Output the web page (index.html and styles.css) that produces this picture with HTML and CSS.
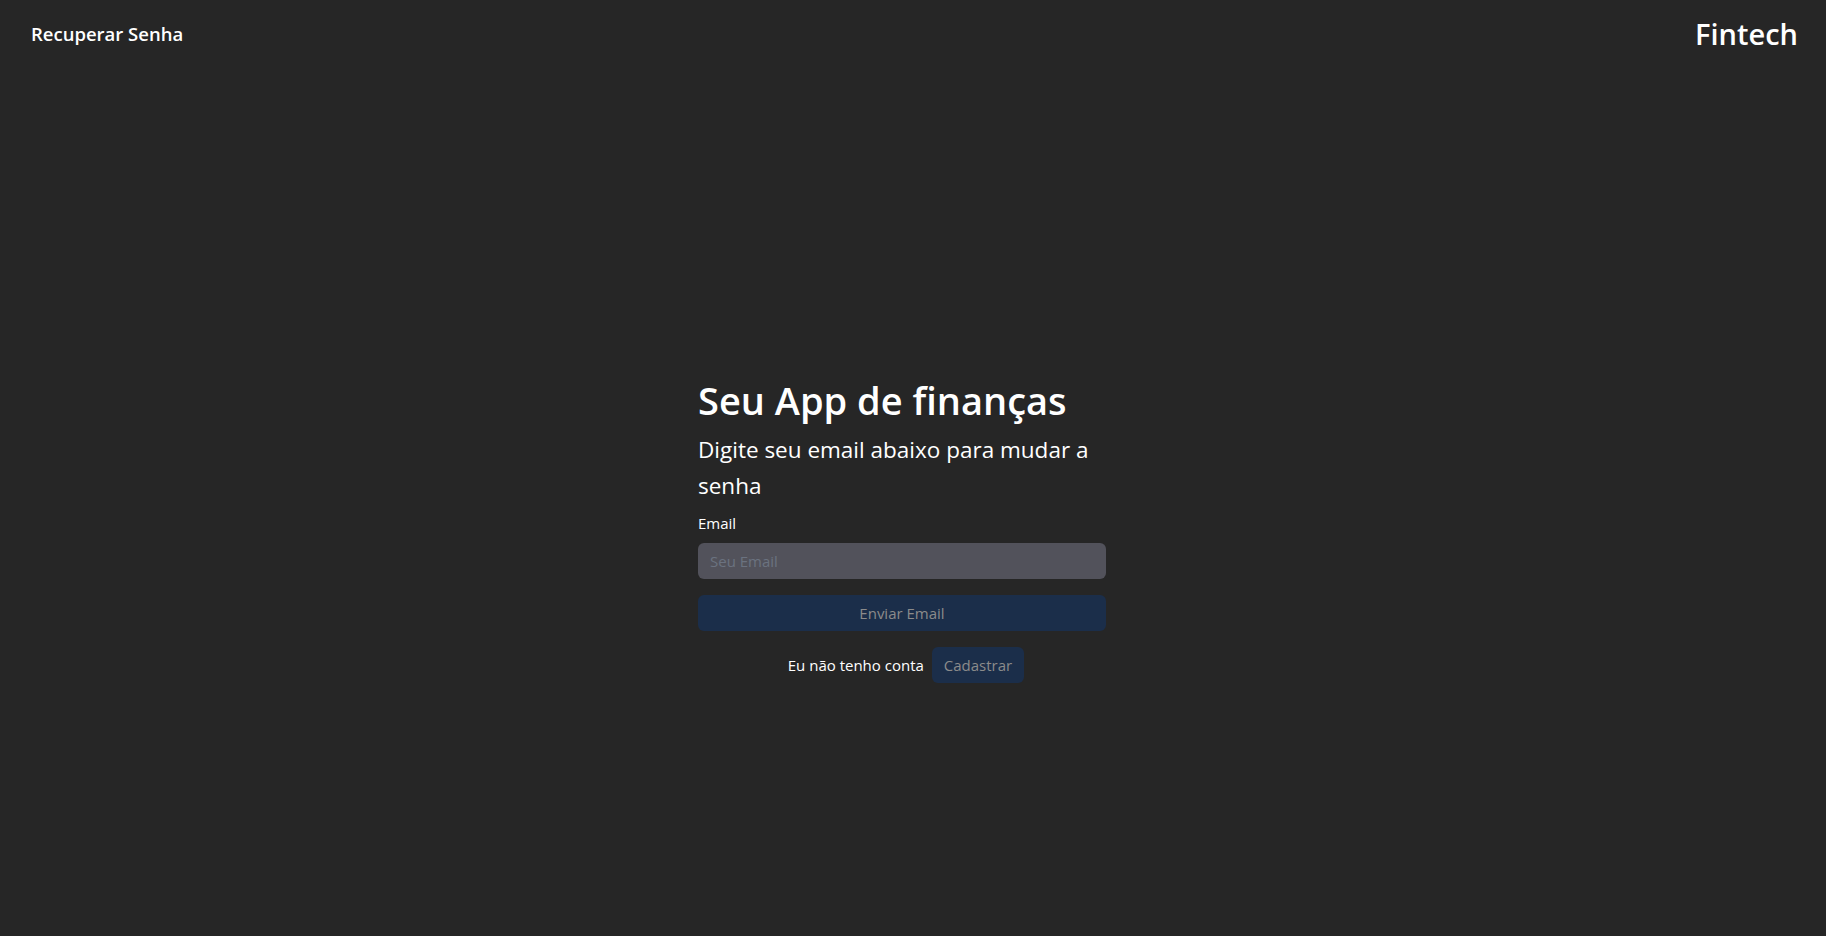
FILE: index.html
```html
<!DOCTYPE html>
<html lang="pt-BR">
<head>
<meta charset="utf-8">
<title>Recuperar Senha</title>
<link rel="stylesheet" href="styles.css">
</head>
<body>
<header class="topbar">
  <span class="page-title">Recuperar Senha</span>
  <span class="brand">Fintech</span>
</header>
<main class="main">
  <form class="card">
    <h1 class="title">Seu App de finanças</h1>
    <p class="subtitle">Digite seu email abaixo para mudar a senha</p>
    <label class="label" for="email">Email</label>
    <input class="input" id="email" type="email" placeholder="Seu Email">
    <button class="btn-primary" type="button">Enviar Email</button>
    <div class="signup">
      <span class="signup-text">Eu não tenho conta</span>
      <button class="btn-secondary" type="button">Cadastrar</button>
    </div>
  </form>
</main>
</body>
</html>
```
FILE: styles.css
```css
* { box-sizing: border-box; }
html, body { margin: 0; padding: 0; }
body {
  background: #262626;
  color: #ffffff;
  font-family: "Open Sans", "Noto Sans", sans-serif;
  min-height: 100vh;
}
.topbar {
  display: flex;
  justify-content: space-between;
  align-items: center;
  height: 66px;
  padding: 0 28px 0 31px;
}
.page-title {
  font-size: 18.5px;
  font-weight: 600;
}
.brand {
  font-size: 29px;
  font-weight: 600;
}
.main {
  display: flex;
  justify-content: center;
  padding-top: 310px;
  padding-right: 22px;
}
.card {
  width: 408px;
  display: flex;
  flex-direction: column;
}
.title {
  margin: 0 0 8px;
  font-size: 38px;
  font-weight: 600;
  line-height: 48px;
}
.subtitle {
  margin: 0;
  font-size: 22.5px;
  line-height: 36px;
}
.label {
  font-size: 15px;
  line-height: 24px;
  margin-top: 7px;
}
.input {
  margin-top: 8px;
  height: 36px;
  border: none;
  border-radius: 6px;
  background: #52525b;
  padding: 0 12px;
  font: inherit;
  font-size: 15px;
  color: #fff;
  outline: none;
}
.input::placeholder { color: #6b7280; }
.btn-primary {
  margin-top: 16px;
  height: 36px;
  border: none;
  border-radius: 6px;
  background: #1b2e4a;
  color: #8b8b8b;
  font: inherit;
  font-size: 15px;
  font-weight: 500;
}
.signup {
  margin-top: 16px;
  padding-left: 8px;
  display: flex;
  justify-content: center;
  align-items: center;
  gap: 8px;
}
.signup-text { font-size: 15px; }
.btn-secondary {
  height: 36px;
  padding: 0 12px;
  border: none;
  border-radius: 6px;
  background: #1b2e4a;
  color: #8b8b8b;
  font: inherit;
  font-size: 15px;
}
```
